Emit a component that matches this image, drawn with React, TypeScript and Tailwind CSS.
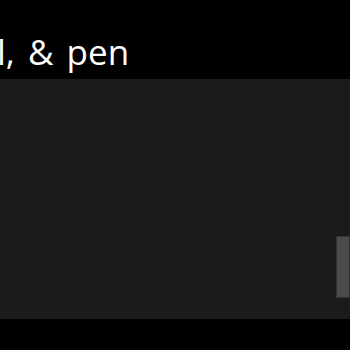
export default function App() {
  return (
    <div className="h-[350px] w-[350px] overflow-hidden bg-black" style={{ fontFamily: '"Open Sans", sans-serif' }}>
      <div className="h-[79px] overflow-hidden">
        <h1 className="ml-[-3px] mt-[31px] whitespace-nowrap text-[35px] leading-[42px] text-white [word-spacing:4px]">
          l, &amp; pen
        </h1>
      </div>
      <div className="flex h-[240px] items-start justify-end bg-[#1b1b1b] pt-[157px]">
        <div className="h-[62px] w-[14px] border border-[#333333] bg-[#4a4a4a]" />
      </div>
    </div>
  )
}
